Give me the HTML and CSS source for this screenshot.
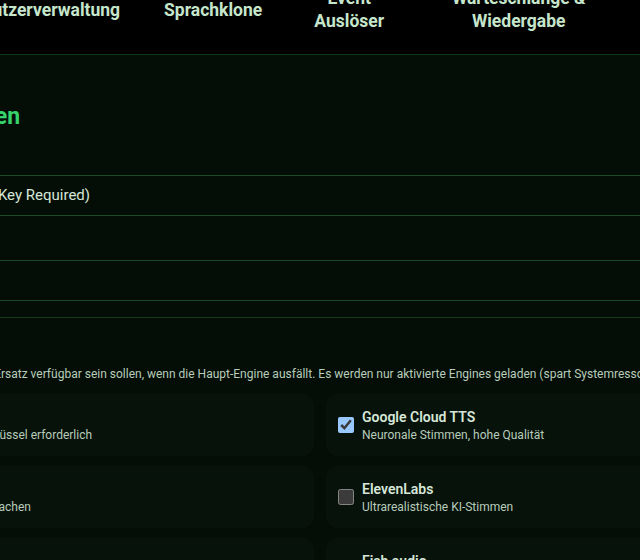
FILE: index.html
```html
<!DOCTYPE html>
<html lang="de">
<head>
  <meta charset="UTF-8" />
  <meta name="viewport" content="width=device-width, initial-scale=1.0" />
  <title>TTS Einstellungen</title>
  <link rel="stylesheet" href="styles.css">
</head>
<body>
  <div class="page">

    <!-- Top navigation -->
    <nav class="topnav">
      <a class="nav-item" href="#">Benutzerverwaltung</a>
      <a class="nav-item" href="#">Sprachklone</a>
      <a class="nav-item nav-item--event" href="#">Event Auslöser</a>
      <a class="nav-item nav-item--queue" href="#">Warteschlange &amp; Wiedergabe</a>
    </nav>

    <!-- Settings -->
    <main class="settings">
      <h2 class="section-title">TTS-Einstellungen</h2>

      <div class="field-stack">
        <div class="field">Google Cloud TTS (API Key Required)</div>
        <div class="field field--tall"></div>
        <div class="field"></div>
      </div>

      <section class="fallback">
        <h3 class="sub-title">Fallback-Engines</h3>
        <p class="hint">Wählen Sie die Engines, die als Ersatz verfügbar sein sollen, wenn die Haupt-Engine ausfällt. Es werden nur aktivierte Engines geladen (spart Systemressourcen).</p>

        <div class="engine-grid">
          <label class="engine-card">
            <input type="checkbox" checked>
            <span class="engine-text">
              <span class="engine-name">Edge TTS</span>
              <span class="engine-desc">Kostenlos, kein API-Schlüssel erforderlich</span>
            </span>
          </label>
          <label class="engine-card">
            <input type="checkbox" checked>
            <span class="engine-text">
              <span class="engine-name">Google Cloud TTS</span>
              <span class="engine-desc">Neuronale Stimmen, hohe Qualität</span>
            </span>
          </label>
          <label class="engine-card">
            <input type="checkbox">
            <span class="engine-text">
              <span class="engine-name">Piper</span>
              <span class="engine-desc">Offline nutzbar, viele Sprachen</span>
            </span>
          </label>
          <label class="engine-card">
            <input type="checkbox">
            <span class="engine-text">
              <span class="engine-name">ElevenLabs</span>
              <span class="engine-desc">Ultrarealistische KI-Stimmen</span>
            </span>
          </label>
          <label class="engine-card">
            <input type="checkbox">
            <span class="engine-text">
              <span class="engine-name">Coqui TTS</span>
              <span class="engine-desc">Lokale Sprachsynthese</span>
            </span>
          </label>
          <label class="engine-card">
            <input type="checkbox">
            <span class="engine-text">
              <span class="engine-name">Fish audio</span>
              <span class="engine-desc">Stimmklonen in Echtzeit</span>
            </span>
          </label>
        </div>
      </section>
    </main>

  </div>
</body>
</html>
```

FILE: styles.css
```css
:root {
  --bg: #040e07;
  --card: #06120a;
  --line: #1b4a26;
  --line-dim: #143a1c;
  --green: #36d36c;
  --text: #d6e6d8;
  --muted: #b8ccba;
}

* {
  margin: 0;
  padding: 0;
  box-sizing: border-box;
}

html, body {
  height: 100%;
  background-color: var(--bg);
  font-family: Roboto, "Liberation Sans", sans-serif;
  color: var(--text);
  overflow: hidden;
  color-scheme: dark;
}

/* page is wider than the window and sits scrolled */
.page {
  width: 1200px;
  margin: -37px 0 0 -200px;
}

/* === TOP NAV === */
.topnav {
  display: flex;
  align-items: center;
  background: #000;
  border-bottom: 1px solid #10381b;
  padding: 24px 0 21px 140px;
}

.nav-item {
  padding: 0 22px;
  color: #c6e6cc;
  font-size: 17.5px;
  font-weight: 700;
  line-height: 23px;
  text-align: center;
  text-decoration: none;
  box-sizing: content-box;
}

.nav-item--event {
  width: 86px;
}

.nav-item--queue {
  width: 165px;
}

/* === SETTINGS === */
.settings {
  padding: 49px 0 0 28px;
}

.section-title {
  color: var(--green);
  font-size: 23px;
  font-weight: 700;
  line-height: 26px;
  margin-bottom: 45px;
}

.field-stack {
  border-top: 1px solid var(--line);
}

.field {
  height: 40px;
  border-bottom: 1px solid var(--line);
  padding: 0 14px;
  font-size: 15px;
  line-height: 39px;
  color: var(--text);
}

.field--tall {
  height: 45px;
}

.fallback {
  margin-top: 16px;
  border-top: 1px solid var(--line-dim);
  padding-top: 18px;
}

.sub-title {
  font-size: 16px;
  font-weight: 700;
  line-height: 22px;
  margin-bottom: 8px;
}

.hint {
  font-size: 12px;
  line-height: 17px;
  color: var(--muted);
  margin-bottom: 11px;
}

.engine-grid {
  display: grid;
  grid-template-columns: 479px 479px;
  gap: 10px 12px;
  margin-left: 7px;
}

.engine-card {
  display: flex;
  align-items: center;
  gap: 8px;
  padding: 13px 12px;
  background: var(--card);
  border-radius: 12px;
}

.engine-card input {
  width: 16px;
  height: 16px;
  margin: 0;
  flex-shrink: 0;
}

.engine-text {
  display: flex;
  flex-direction: column;
}

.engine-name {
  font-size: 14px;
  font-weight: 600;
  line-height: 20px;
  color: var(--text);
}

.engine-desc {
  font-size: 12px;
  line-height: 16px;
  color: var(--muted);
}
```
